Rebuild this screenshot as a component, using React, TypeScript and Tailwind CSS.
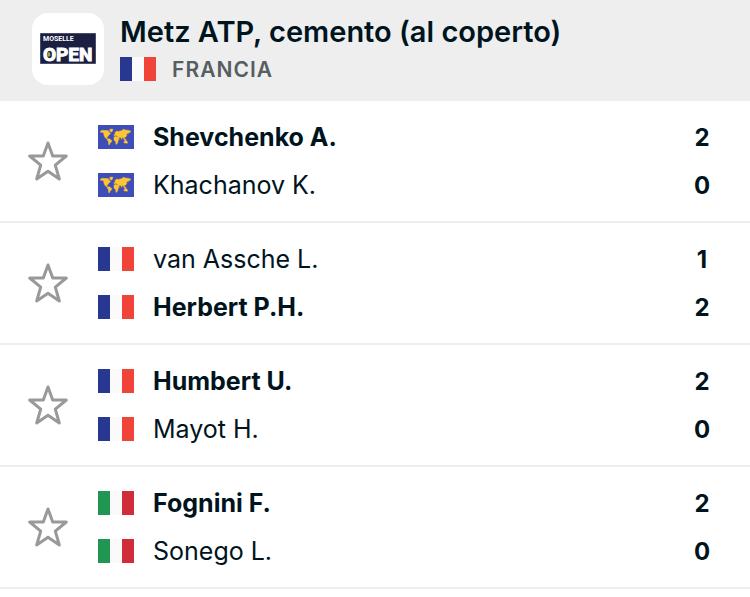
type FlagCode = 'fr' | 'it' | 'world';

interface Player {
  name: string;
  flag: FlagCode;
  score: number;
}

interface Match {
  id: string;
  players: [Player, Player];
}

const MATCHES: Match[] = [
  {
    id: 'shevchenko-khachanov',
    players: [
      { name: 'Shevchenko A.', flag: 'world', score: 2 },
      { name: 'Khachanov K.', flag: 'world', score: 0 },
    ],
  },
  {
    id: 'van-assche-herbert',
    players: [
      { name: 'van Assche L.', flag: 'fr', score: 1 },
      { name: 'Herbert P.H.', flag: 'fr', score: 2 },
    ],
  },
  {
    id: 'humbert-mayot',
    players: [
      { name: 'Humbert U.', flag: 'fr', score: 2 },
      { name: 'Mayot H.', flag: 'fr', score: 0 },
    ],
  },
  {
    id: 'fognini-sonego',
    players: [
      { name: 'Fognini F.', flag: 'it', score: 2 },
      { name: 'Sonego L.', flag: 'it', score: 0 },
    ],
  },
];

const STRIPES = {
  fr: ['#283891', '#fafafa', '#f04438'],
  it: ['#219653', '#fafafa', '#d02c3a'],
};

function Flag({ code }: { code: FlagCode }) {
  if (code === 'world') {
    return (
      <svg width="36" height="24" viewBox="0 0 36 24" className="shrink-0" aria-hidden="true">
        <path d="M0 0h36v24H0z" fill="#3f4db8" />
        <g fill="#fec52e" stroke="#fec52e" strokeWidth="0.4" strokeLinejoin="round">
          {/* North America + Greenland */}
          <path d="M2.500 6L4.500 5.300 8 5.600 10 5.400 11 6.500 10.200 7.500 11.500 7.300 12.600 8.800 11.300 9.600 10 11.200 9.600 12.200 8.800 12 8.500 12.900 9.600 13.600 10 14.200 8.300 13.800 6.900 12.300 6 10.300 5.600 8.300 4.600 7.300 2.800 7.600z" />
          <path d="M11.500 4.600L13.500 3.900 15 4.300 14.300 6.300 13 7.300 12.200 6.200z" />
          {/* South America */}
          <path d="M9.800 13.900L11.200 13.700 13.800 15.400 13.200 17.200 12.100 18 11.400 19.900 10.600 19.400 10.500 16.900 9.500 15.400z" />
          {/* Africa */}
          <path d="M15.800 12.400L17 11.400 19.500 11.800 20.500 13.500 21.500 13.700 20.200 15.400 20 17 18.800 19.300 18 19.300 17.500 16.200 16.200 15.500z" />
          {/* Eurasia */}
          <path d="M16 10.800L16.200 9.400 17.200 9.100 17 7.600 18.600 6 20.400 6.600 22 5.900 23.500 5.700 25.500 4.200 27.500 5 30 5.300 32.600 6 32.400 7.200 30.800 7.600 30 9 29.500 8.200 28.600 9 28.800 10.400 27.800 11.900 26.500 12.500 26.800 13.900 26 13.800 25.200 12.400 24.500 12.300 23.700 14.400 22.700 12.400 21.900 12.300 20.800 13.200 19.600 11.300 18.200 10.500z" />
          {/* Oceania */}
          <path d="M25.600 14.500L26.700 15.500 28.200 15.700 27.900 14.200 27.200 14.300 26.900 15.100 26 14.100zM25.900 16.800L27.300 15.900 28.900 16 29.700 17.300 29 18.500 27.600 17.900 26.100 18.100z" />
        </g>
      </svg>
    );
  }

  return (
    <svg width="36" height="24" viewBox="0 0 36 24" className="shrink-0" aria-hidden="true">
      {STRIPES[code].map((color, i) => (
        <rect key={color} x={i * 12} width="12" height="24" fill={color} />
      ))}
    </svg>
  );
}

function TournamentLogo() {
  return (
    <div className="flex size-18 shrink-0 items-center justify-center rounded-2xl bg-white">
      <svg width="56" height="32" viewBox="0 0 56 32" role="img" aria-label="Moselle Open">
        <path d="M0.500 0.500h55v30H0.500z" fill="#1b1f42" stroke="#4a4d68" />
        <g fill="#fff" fontFamily="Roboto, 'Liberation Sans', sans-serif" fontWeight="700">
          <text x="3" y="8" fontSize="7">MOSELLE</text>
          <text x="3" y="28" fontSize="19" stroke="#fff" strokeWidth="1">OPEN</text>
        </g>
        <path d="M9 18.500l1 1.500.5 2.500-1.500 1.500-1.500-1.500.5-2.500z" fill="#a9a833" />
      </svg>
    </div>
  );
}

function FavouriteButton({ label }: { label: string }) {
  return (
    <button type="button" aria-label={label} className="shrink-0 cursor-pointer">
      <svg width="40" height="40" viewBox="0 0 40 40" fill="none" aria-hidden="true">
        <path
          d="M20 2l4.700 13H38.300L27.300 24.200 31.300 38 20 30.200 8.700 38l4-13.800L1.700 15h13.600z"
          stroke="#999"
          strokeWidth="3"
          strokeLinejoin="round"
        />
      </svg>
    </button>
  );
}

function PlayerLine({ player, winner }: { player: Player; winner: boolean }) {
  return (
    <li className="flex h-12 items-center">
      <Flag code={player.flag} />
      <span className={winner ? 'ml-[19px] flex-1 pt-0.5 font-bold' : 'ml-[19px] flex-1 pt-0.5'}>
        {player.name}
      </span>
      <span className="w-4 pt-0.5 text-center text-2xl font-bold">{player.score}</span>
    </li>
  );
}

function MatchRow({ match }: { match: Match }) {
  const best = Math.max(...match.players.map((p) => p.score));

  return (
    <li className="flex items-center border-b-2 border-[#eee] py-3 pr-10 pl-7">
      <FavouriteButton label={match.players.map((p) => p.name).join(' - ')} />
      <ul className="ml-[30px] flex-1 text-[25px]">
        {match.players.map((player) => (
          <PlayerLine key={player.name} player={player} winner={player.score === best} />
        ))}
      </ul>
    </li>
  );
}

export default function App() {
  return (
    <main className="min-h-screen bg-white font-['Inter','Liberation_Sans',sans-serif] text-[#00141e]">
      <header className="flex items-start gap-4 bg-[#eee] px-8 pt-[13px] pb-3.5">
        <TournamentLogo />
        <div>
          <h1 className="text-[29px] leading-[38px] font-semibold">
            Metz ATP, cemento (al coperto)
          </h1>
          <div className="flex items-center gap-4">
            <Flag code="fr" />
            <span className="pt-0.5 text-[21px] leading-[34px] font-semibold tracking-wider text-[#555e61]">
              FRANCIA
            </span>
          </div>
        </div>
      </header>

      <ul>
        {MATCHES.map((match) => (
          <MatchRow key={match.id} match={match} />
        ))}
      </ul>
    </main>
  );
}
